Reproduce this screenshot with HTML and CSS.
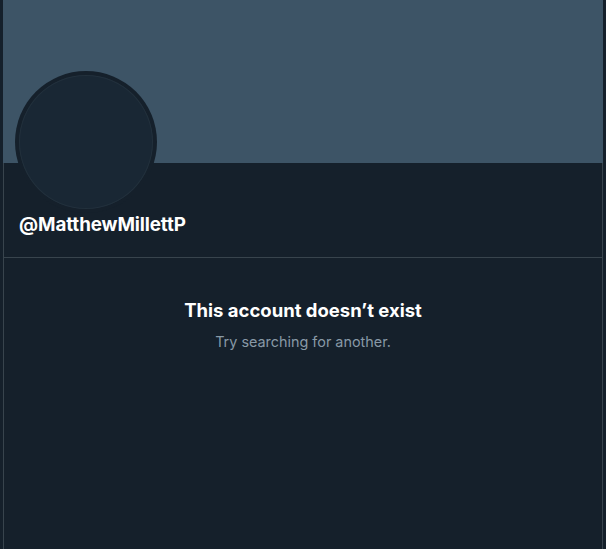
FILE: index.html
```html
<!DOCTYPE html>
<html>
<head>
<meta charset="utf-8">
<link rel="stylesheet" href="styles.css">
</head>
<body>
<main class="column">
  <div class="banner"></div>
  <header class="profile">
    <div class="avatar"><div class="avatar-inner"></div></div>
    <div class="handle">@MatthewMillettP</div>
  </header>
  <section class="empty">
    <h2 class="empty-title">This account doesn’t exist</h2>
    <p class="empty-sub">Try searching for another.</p>
  </section>
</main>
</body>
</html>
```

FILE: styles.css
```css
html, body {
  margin: 0;
  padding: 0;
  height: 100%;
  background: #15202b;
}
body {
  font-family: "Inter", "Liberation Sans", sans-serif;
  color: #ffffff;
  overflow: hidden;
}
.column {
  margin: 0 3px;
  height: 100%;
  border-left: 1px solid #38444d;
  border-right: 1px solid #38444d;
  display: flex;
  flex-direction: column;
}
.banner {
  height: 163px;
  background: #3d5466;
  margin: 0 -1px;
}
.profile {
  padding: 0 0 0 11px;
  border-bottom: 1px solid #38444d;
  height: 94px;
}
.avatar {
  width: 142px;
  height: 142px;
  margin-top: -92px;
  border-radius: 50%;
  background: #15202b;
  padding: 4px;
  box-sizing: border-box;
}
.avatar-inner {
  width: 100%;
  height: 100%;
  border-radius: 50%;
  background: #192734;
  box-shadow: inset 0 0 0 1px #22303c;
}
.handle {
  margin: 0 0 0 4px;
  font-size: 18.8px;
  font-weight: 700;
  line-height: 24px;
  letter-spacing: -0.1px;
}
.empty {
  text-align: center;
  padding-top: 40px;
}
.empty-title {
  margin: 0;
  font-size: 18.5px;
  font-weight: 700;
  line-height: 24px;
}
.empty-sub {
  margin: 10px 0 0;
  font-size: 14.4px;
  line-height: 20px;
  color: #8899a6;
}
```
